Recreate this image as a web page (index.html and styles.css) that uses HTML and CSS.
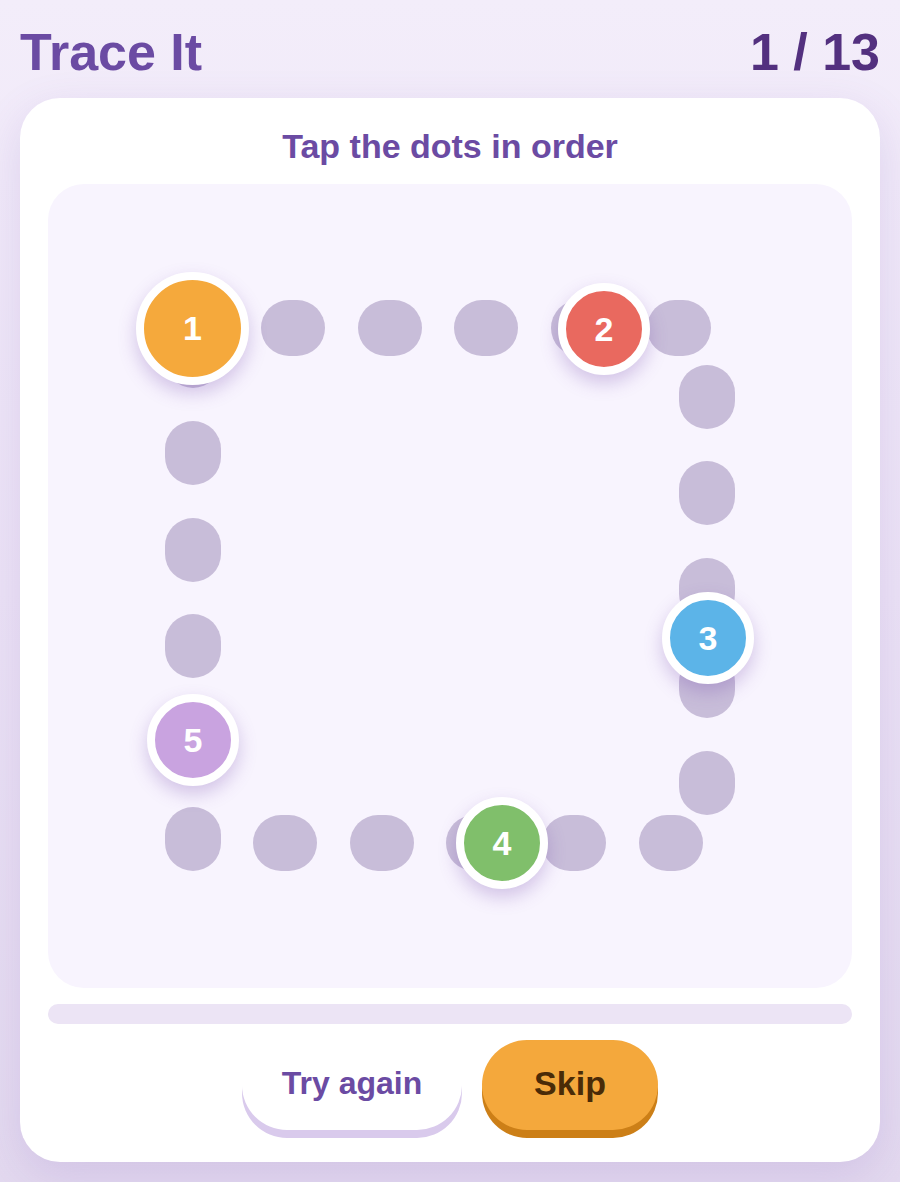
FILE: index.html
```html
<!DOCTYPE html>
<html lang="en">
<head>
<meta charset="utf-8">
<title>Trace It</title>
<link rel="stylesheet" href="styles.css">
</head>
<body>
<header class="top">
  <h1 class="brand">Trace It</h1>
  <div class="count">1 / 13</div>
</header>
<main class="card">
  <h2 class="prompt">Tap the dots in order</h2>
  <div class="board">
    <!-- top row -->
    <span class="pill h" style="left:213px;top:116px"></span>
    <span class="pill h" style="left:310px;top:116px"></span>
    <span class="pill h" style="left:406px;top:116px"></span>
    <span class="pill h" style="left:503px;top:116px"></span>
    <span class="pill h" style="left:599px;top:116px"></span>
    <!-- right column -->
    <span class="pill v" style="left:631px;top:181px"></span>
    <span class="pill v" style="left:631px;top:277px"></span>
    <span class="pill v" style="left:631px;top:374px"></span>
    <span class="pill v" style="left:631px;top:470px"></span>
    <span class="pill v" style="left:631px;top:567px"></span>
    <!-- bottom row -->
    <span class="pill h" style="left:591px;top:631px"></span>
    <span class="pill h" style="left:494px;top:631px"></span>
    <span class="pill h" style="left:398px;top:631px"></span>
    <span class="pill h" style="left:302px;top:631px"></span>
    <span class="pill h" style="left:205px;top:631px"></span>
    <!-- left column -->
    <span class="pill v" style="left:117px;top:623px"></span>
    <span class="pill v" style="left:117px;top:527px"></span>
    <span class="pill v" style="left:117px;top:430px"></span>
    <span class="pill v" style="left:117px;top:334px"></span>
    <span class="pill v" style="left:117px;top:237px"></span>
    <span class="pill v" style="left:117px;top:140px"></span>

    <button class="dot dot-big c-orange" style="left:88px;top:88px">1</button>
    <button class="dot c-red" style="left:510px;top:99px">2</button>
    <button class="dot c-blue" style="left:614px;top:408px">3</button>
    <button class="dot c-green" style="left:408px;top:613px">4</button>
    <button class="dot c-purple" style="left:99px;top:510px">5</button>
  </div>
  <div class="progress"></div>
  <div class="actions">
    <button class="btn btn-ghost">Try again</button>
    <button class="btn btn-skip">Skip</button>
  </div>
</main>
</body>
</html>
```
FILE: styles.css
```css
* { box-sizing: border-box; }
html, body { margin: 0; padding: 0; }
body {
  width: 900px;
  height: 1182px;
  overflow: hidden;
  font-family: "Liberation Sans", Arial, sans-serif;
  background: linear-gradient(180deg, #f3edfa 0%, #ece3f6 50%, #e3d9ef 100%);
}
.top {
  display: flex;
  justify-content: space-between;
  align-items: flex-start;
  padding: 22px 20px 0 20px;
  height: 98px;
}
.brand {
  margin: 0;
  font-size: 52px;
  line-height: 60px;
  font-weight: 700;
  color: #6b4ba3;
}
.count {
  font-size: 52px;
  line-height: 60px;
  font-weight: 700;
  color: #53307f;
}
.card {
  margin: 0 20px;
  height: 1064px;
  background: #ffffff;
  border-radius: 40px;
  padding: 28px 28px 0 28px;
  box-shadow: 0 14px 44px rgba(120, 80, 180, 0.16);
  display: flex;
  flex-direction: column;
}
.prompt {
  margin: 0;
  text-align: center;
  font-size: 34px;
  line-height: 40px;
  font-weight: 700;
  color: #6b4ba3;
}
.board {
  position: relative;
  margin-top: 18px;
  width: 804px;
  height: 804px;
  background: #f8f4fe;
  border-radius: 36px;
}
.pill {
  position: absolute;
  background: #c8bdd9;
  border-radius: 28px;
}
.pill.h { width: 64px; height: 56px; }
.pill.v { width: 56px; height: 64px; }
.dot {
  position: absolute;
  width: 92px;
  height: 92px;
  border-radius: 50%;
  border: 8px solid #ffffff;
  padding: 0;
  font-family: "Liberation Sans", Arial, sans-serif;
  font-size: 34px;
  font-weight: 700;
  color: #ffffff;
  display: flex;
  align-items: center;
  justify-content: center;
  box-shadow: 0 8px 18px rgba(110, 70, 170, 0.28);
}
.dot-big { width: 113px; height: 113px; }
.c-orange { background: #f5a93c; }
.c-red { background: #e9695f; }
.c-blue { background: #5cb4e8; }
.c-green { background: #80bf6b; }
.c-purple { background: #c9a3e0; }
.progress {
  margin-top: 16px;
  height: 20px;
  border-radius: 10px;
  background: #ece4f5;
}
.actions {
  margin-top: 16px;
  display: flex;
  justify-content: center;
  gap: 20px;
}
.btn {
  height: 90px;
  border: none;
  border-radius: 45px;
  padding: 0 0 3px 0;
  font-family: "Liberation Sans", Arial, sans-serif;
  font-weight: 700;
}
.btn-ghost {
  width: 220px;
  background: #ffffff;
  color: #6b4ba3;
  font-size: 32px;
  box-shadow: 0 8px 0 #d9caec;
}
.btn-skip {
  width: 176px;
  background: #f4a83c;
  color: #4a2b07;
  font-size: 34px;
  box-shadow: 0 8px 0 #cc7f17;
}
```
